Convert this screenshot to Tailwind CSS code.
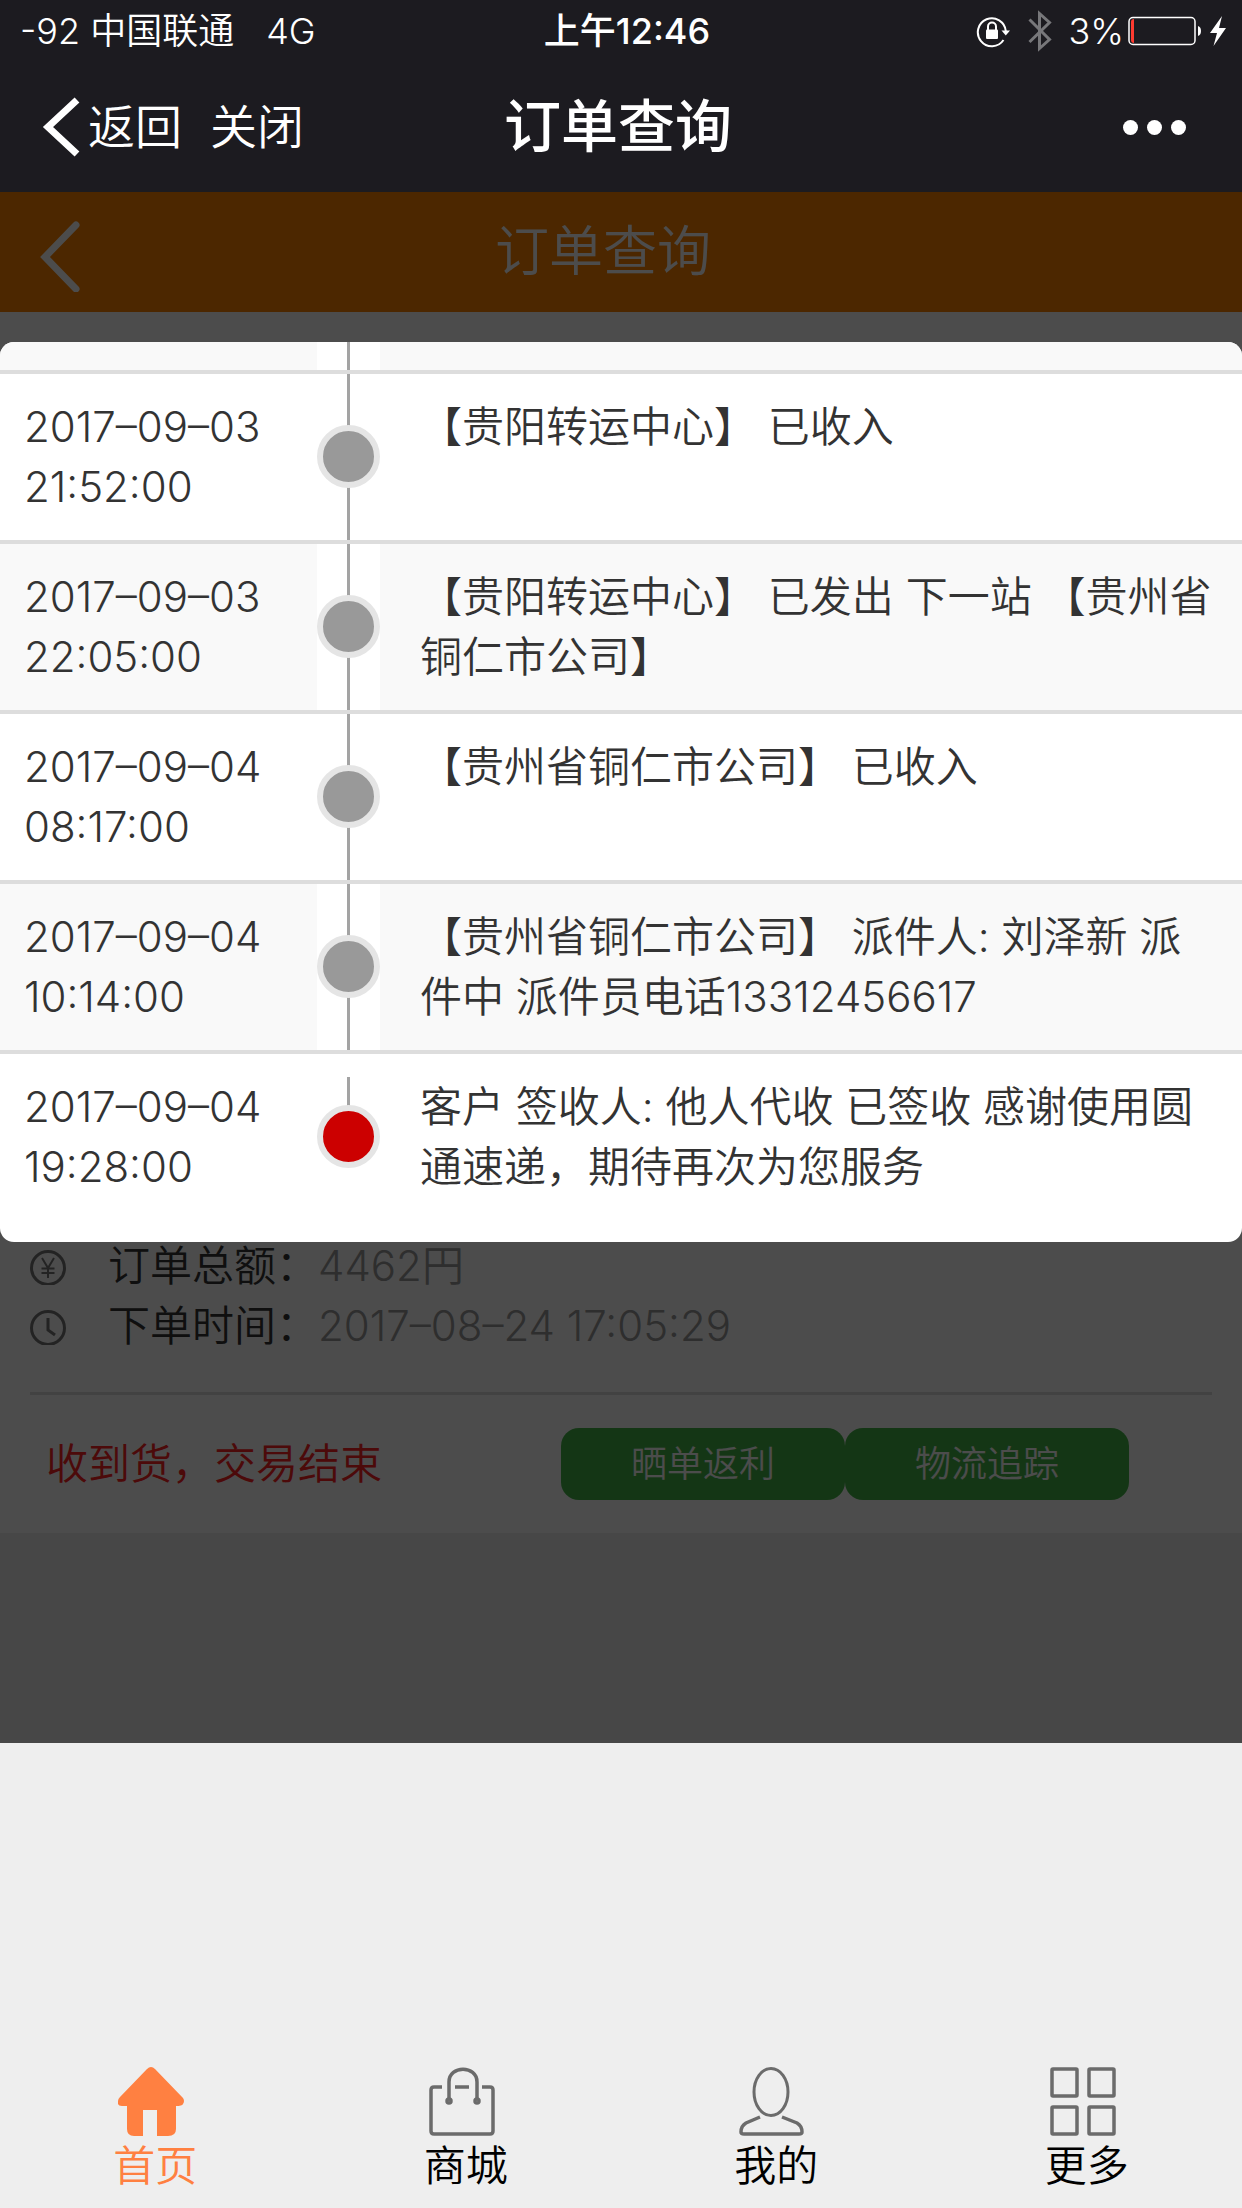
<!DOCTYPE html>
<html lang="zh-CN">
<head>
    <meta charset="UTF-8">
    <meta name="viewport" content="width=device-width, initial-scale=1.0">
    <title>订单查询</title>
    <script src="https://cdn.jsdelivr.net/npm/@tailwindcss/browser@4"></script>
</head>
<body class="min-h-screen flex flex-col bg-[#eeeeee] font-['Inter','Noto_Sans_CJK_SC',sans-serif] font-[350] text-[42px] leading-[60px] text-[#333333]">

    <!-- Barre d'état + navigation -->
    <header class="bg-[#1c1b20] text-white">
        <div class="h-[62px] pl-5 pr-4 grid grid-cols-[1fr_auto_1fr] items-center text-4xl">
            <div class="flex items-center gap-8">
                <span>-92 中国联通</span>
                <span>4G</span>
            </div>
            <div class="pl-2 font-medium">上午12:46</div>
            <div class="flex items-center justify-end">
                <svg class="w-[34px] h-[34px] mr-[18px]" viewBox="0 0 34 34" fill="none">
                    <path d="M27.5 26A14 14 0 1 1 29.8 17" stroke="#fff" stroke-width="2"/>
                    <path d="M25.5 16.500H34L29.800 21.500Z" fill="#fff"/>
                    <rect x="10" y="15.500" width="12" height="9.500" rx="1" fill="#fff"/>
                    <path d="M12 16V12.500a4 4 0 0 1 8 0V16" stroke="#fff" stroke-width="2"/>
                </svg>
                <svg class="w-[24px] h-[42px] mr-4" viewBox="0 0 24 42" fill="none" stroke="#77777a" stroke-width="3">
                    <path d="M1.500 9.500L21.500 29.500L11.500 38.500V3.500L21.500 12.500L1.500 32"/>
                </svg>
                <span class="mr-1">3%</span>
                <svg class="w-[74px] h-[30px] mr-2" viewBox="0 0 74 30" fill="none">
                    <rect x="1" y="1.500" width="66" height="27" rx="4" stroke="#fff" stroke-width="1.500"/>
                    <path d="M3 6a3 3 0 0 1 3-3V27a3 3 0 0 1-3-3Z" fill="#ff3b30"/>
                    <path d="M70 10C74 11 74 19 70 20Z" fill="#fff"/>
                </svg>
                <svg class="w-[16px] h-[30px]" viewBox="0 0 16 30" fill="#fff">
                    <path d="M12 0L0 17H7L3.500 30L16 12H9Z"/>
                </svg>
            </div>
        </div>
        <div class="h-[130px] pl-[42px] pr-14 grid grid-cols-[1fr_auto_1fr] items-center">
            <div class="flex items-center text-[47px]">
                <a href="#" class="flex items-center gap-[6px]">
                    <svg class="w-[40px] h-[60px]" viewBox="0 0 40 60" fill="none" stroke="#fff" stroke-width="7">
                        <path d="M35 3L6 30L35 57"/>
                    </svg>
                    返回
                </a>
                <a href="#" class="ml-7">关闭</a>
            </div>
            <h1 class="pl-2 text-[57px] font-medium">订单查询</h1>
            <button type="button" aria-label="更多选项" class="flex justify-end gap-[9px]">
                <span class="size-[15px] rounded-full bg-white"></span>
                <span class="size-[15px] rounded-full bg-white"></span>
                <span class="size-[15px] rounded-full bg-white"></span>
            </button>
        </div>
    </header>

    <main class="relative pb-[210px]">
        <div class="bg-white">
            <div class="h-[120px] pl-10 pr-[116px] flex items-center bg-[#ff8400] text-white">
                <a href="#" aria-label="返回">
                    <svg class="w-[40px] h-[72px] mt-2" viewBox="0 0 40 72" fill="none" stroke="#fff" stroke-width="7" stroke-linecap="round">
                        <path d="M36 5L5 37L36 69"/>
                    </svg>
                </a>
                <h2 class="flex-1 text-center text-[54px]">订单查询</h2>
            </div>

            <!-- Fenêtre de suivi du colis, au-dessus du voile -->
            <section role="dialog" aria-label="物流追踪" class="relative z-10 mt-[30px] rounded-[14px] overflow-hidden bg-white">
                <table class="w-full table-fixed border-separate border-spacing-0">
                    <colgroup>
                        <col class="w-[317px]">
                        <col class="w-[63px]">
                        <col>
                    </colgroup>
                    <tbody class="align-top">
                        <tr class="bg-[#f9f9f9]">
                            <td class="h-7"></td>
                            <td class="relative bg-white"><span class="absolute inset-y-0 left-[30px] w-[3px] bg-[#a3a3a3]"></span></td>
                            <td></td>
                        </tr>
                        <tr>
                            <td class="border-t-4 border-[#dddddd] pl-6 pr-10 py-[23px]">2017–09–03 21:52:00</td>
                            <td class="relative border-t-4 border-[#dddddd] bg-white pt-[51px]">
                                <span class="absolute inset-y-0 left-[30px] w-[3px] bg-[#a3a3a3]"></span>
                                <span class="relative block size-[63px] rounded-full border-6 border-[#e5e5e5] bg-[#999999]"></span>
                            </td>
                            <td class="border-t-4 border-[#dddddd] pl-10 pr-6 py-[23px]">【贵阳转运中心】 已收入</td>
                        </tr>
                        <tr class="bg-[#f9f9f9]">
                            <td class="border-t-4 border-[#dddddd] pl-6 pr-10 py-[23px]">2017–09–03 22:05:00</td>
                            <td class="relative border-t-4 border-[#dddddd] bg-white pt-[51px]">
                                <span class="absolute inset-y-0 left-[30px] w-[3px] bg-[#a3a3a3]"></span>
                                <span class="relative block size-[63px] rounded-full border-6 border-[#e5e5e5] bg-[#999999]"></span>
                            </td>
                            <td class="border-t-4 border-[#dddddd] pl-10 pr-6 py-[23px]">【贵阳转运中心】 已发出 下一站 【贵州省铜仁市公司】</td>
                        </tr>
                        <tr>
                            <td class="border-t-4 border-[#dddddd] pl-6 pr-10 py-[23px]">2017–09–04 08:17:00</td>
                            <td class="relative border-t-4 border-[#dddddd] bg-white pt-[51px]">
                                <span class="absolute inset-y-0 left-[30px] w-[3px] bg-[#a3a3a3]"></span>
                                <span class="relative block size-[63px] rounded-full border-6 border-[#e5e5e5] bg-[#999999]"></span>
                            </td>
                            <td class="border-t-4 border-[#dddddd] pl-10 pr-6 py-[23px]">【贵州省铜仁市公司】 已收入</td>
                        </tr>
                        <tr class="bg-[#f9f9f9]">
                            <td class="border-t-4 border-[#dddddd] pl-6 pr-10 py-[23px]">2017–09–04 10:14:00</td>
                            <td class="relative border-t-4 border-[#dddddd] bg-white pt-[51px]">
                                <span class="absolute inset-y-0 left-[30px] w-[3px] bg-[#a3a3a3]"></span>
                                <span class="relative block size-[63px] rounded-full border-6 border-[#e5e5e5] bg-[#999999]"></span>
                            </td>
                            <td class="border-t-4 border-[#dddddd] pl-10 pr-6 py-[23px]">【贵州省铜仁市公司】 派件人: 刘泽新 派件中 派件员电话13312456617</td>
                        </tr>
                        <tr>
                            <td class="border-t-4 border-[#dddddd] pl-6 pr-10 pt-[23px] pb-[45px]">2017–09–04 19:28:00</td>
                            <td class="relative border-t-4 border-[#dddddd] bg-white pt-[51px]">
                                <span class="absolute top-[23px] h-8 left-[30px] w-[3px] bg-[#a3a3a3]"></span>
                                <span class="relative block size-[63px] rounded-full border-6 border-[#e5e5e5] bg-[#cc0000]"></span>
                            </td>
                            <td class="border-t-4 border-[#dddddd] pl-10 pr-6 pt-[23px] pb-[45px]">客户 签收人: 他人代收 已签收 感谢使用圆通速递，期待再次为您服务</td>
                        </tr>
                    </tbody>
                </table>
            </section>

            <!-- Détails de la commande -->
            <section class="px-[30px] pb-[33px]">
                <dl class="flex flex-col gap-3 leading-[48px] text-[#999999]">
                    <div class="flex items-center">
                        <svg class="size-[38px] mr-10" viewBox="0 0 38 38" fill="none" stroke="#777" stroke-width="3">
                            <circle cx="18" cy="21" r="16.500"/>
                            <path d="M12 11L18 21L24 11M18 21V31M11.500 21.500H24.500M11.500 26H24.500" stroke-width="2"/>
                        </svg>
                        <dt class="text-[#333333]">订单总额：</dt>
                        <dd>4462円</dd>
                    </div>
                    <div class="flex items-center">
                        <svg class="size-[38px] mr-10" viewBox="0 0 38 38" fill="none" stroke="#777" stroke-width="3">
                            <circle cx="18" cy="21" r="16.500"/>
                            <path d="M18 11V23L25 28"/>
                        </svg>
                        <dt class="text-[#333333]">下单时间：</dt>
                        <dd>2017–08–24 17:05:29</dd>
                    </div>
                </dl>
                <div class="mt-[42px] pt-[33px] pl-4 pr-[83px] flex items-center justify-between border-t-3 border-[#dddddd]">
                    <p class="text-[#ff2222]">收到货，交易结束</p>
                    <div class="flex text-4xl text-white">
                        <button type="button" class="w-[284px] h-[72px] rounded-[18px] bg-[#44b549]">晒单返利</button>
                        <button type="button" class="w-[284px] h-[72px] rounded-[18px] bg-[#44b549]">物流追踪</button>
                    </div>
                </div>
            </section>
        </div>
        <div class="absolute inset-0 bg-black/70"></div>
    </main>

    <!-- Barre d'onglets -->
    <nav class="mt-auto pb-3 grid grid-cols-4 text-black">
        <a href="#" class="flex flex-col items-center text-[#ff8041]">
            <svg class="w-[66px] h-[69px] mr-2" viewBox="0 0 66 69" fill="currentColor">
                <path d="M29 2Q33-2 37 2L65 31Q67 34 65 37Q64 39 58 39V62Q58 69 50 69H39V43H25V69H16Q9 69 9 62V39H4Q-1 39 0 34Q0 32 2 30Z"/>
            </svg>
            首页
        </a>
        <a href="#" class="flex flex-col items-center">
            <svg class="w-[66px] h-[69px] mr-2" viewBox="0 0 66 69" fill="none" stroke="#6b6b6b" stroke-width="3.500">
                <path d="M13 20H5Q2 20 2 23V64Q2 67 5 67H61Q64 67 64 64V23Q64 20 61 20H53M26 20H40M20 33V15C20-2 48-2 48 15V33"/>
                <circle cx="20" cy="34" r="2"/>
                <circle cx="48" cy="34" r="2"/>
            </svg>
            商城
        </a>
        <a href="#" class="flex flex-col items-center">
            <svg class="w-[66px] h-[69px] mr-2" viewBox="0 0 66 69" fill="none" stroke="#6b6b6b" stroke-width="3">
                <ellipse cx="32" cy="25" rx="17" ry="23.500"/>
                <path d="M21 50L7 56Q2 59 2 65Q2 67 5 67H60Q63 67 63 65Q63 59 58 56L43 50" stroke-width="3.500"/>
            </svg>
            我的
        </a>
        <a href="#" class="flex flex-col items-center">
            <svg class="w-[66px] h-[69px] mr-2" viewBox="0 0 66 69" fill="none" stroke="#6b6b6b" stroke-width="3.500">
                <rect x="2" y="2" width="25" height="27" rx="1"/>
                <rect x="39" y="2" width="25" height="27" rx="1"/>
                <rect x="2" y="40" width="25" height="27" rx="1"/>
                <rect x="39" y="40" width="25" height="27" rx="1"/>
            </svg>
            更多
        </a>
    </nav>

</body>
</html>
